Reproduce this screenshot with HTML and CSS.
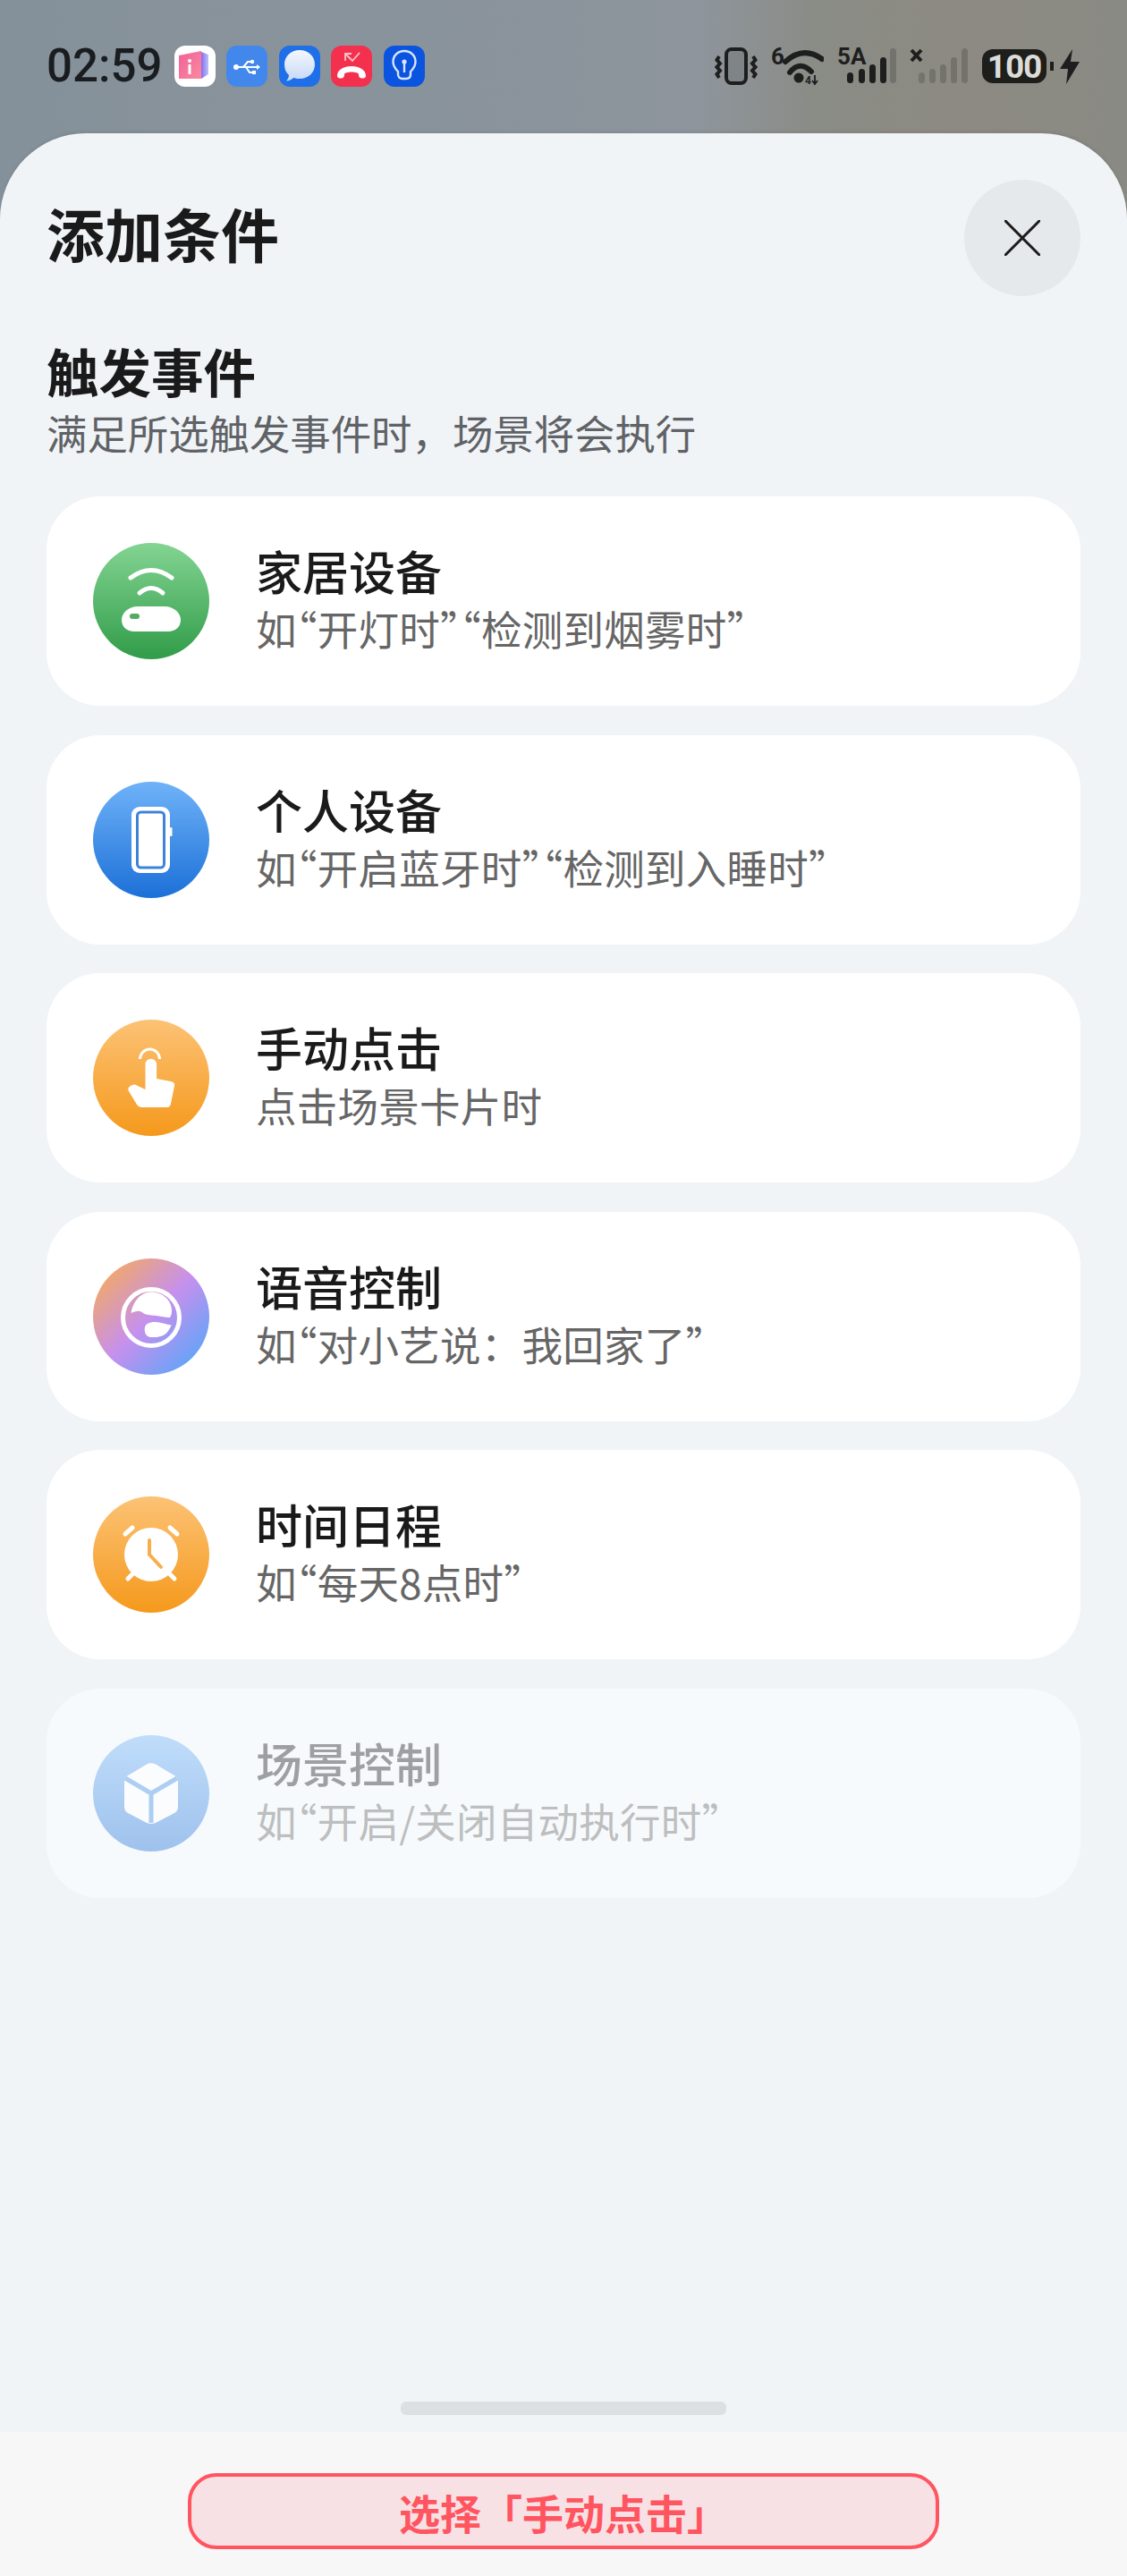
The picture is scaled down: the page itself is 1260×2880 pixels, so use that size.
FILE: index.html
```html
<!DOCTYPE html>
<html lang="zh-CN">
<head>
    <meta charset="UTF-8">
    <meta name="viewport" content="width=device-width, initial-scale=1.0">
    <title>添加条件</title>
    <link rel="stylesheet" href="styles.css">
</head>
<body>
    <!-- Status bar -->
    <header class="status-bar">
        <div class="status-left">
            <span class="clock">02:59</span>
            <svg class="notify" viewBox="0 0 46 46">
                <defs>
                    <linearGradient id="door" x1="0" y1="0" x2="1" y2="1"><stop offset="0" stop-color="#f0609a"/><stop offset="1" stop-color="#fb8a9c"/></linearGradient>
                    <linearGradient id="doorSide" x1="0" y1="0" x2="1" y2="0"><stop offset="0" stop-color="#8a6cf0"/><stop offset="1" stop-color="#b9c4f8"/></linearGradient>
                </defs>
                <rect width="46" height="46" rx="12" fill="#fff"/>
                <path d="M30 7 L38 10 V32 L30 37 Z" fill="url(#doorSide)"/>
                <path d="M5 11 L30 6 V37 H5 Z" fill="url(#door)"/>
                <circle cx="17" cy="17" r="2" fill="#fff"/>
                <rect x="15.500" y="21" width="3" height="11" fill="#fff"/>
            </svg>
            <svg class="notify" viewBox="0 0 46 46">
                <rect width="46" height="46" rx="12" fill="#4288ec"/>
                <path d="M11 24 H35 M19 24 L24 18 H28 M22 24 L26 30 H30" fill="none" stroke="#fff" stroke-width="2"/>
                <circle cx="11" cy="24" r="3" fill="#fff"/>
                <circle cx="29" cy="18" r="2.200" fill="#fff"/>
                <rect x="29" y="28" width="4" height="4" fill="#fff"/>
                <path d="M34 21 L38 24 L34 27 Z" fill="#fff"/>
            </svg>
            <svg class="notify" viewBox="0 0 46 46">
                <defs>
                    <linearGradient id="bubble" x1="0" y1="0" x2="0" y2="1"><stop offset="0" stop-color="#f4f7fd"/><stop offset="1" stop-color="#c6d9f6"/></linearGradient>
                </defs>
                <rect width="46" height="46" rx="12" fill="#1f6fe8"/>
                <path d="M23 5 C33 5 40 12 40 21 C40 30 33 37 23 37 C20 37 18 36.500 16 36 C14 38 11 39.500 8 39.500 C10 37.500 11 35 11 33 C7.500 30 6 26 6 21 C6 12 13 5 23 5 Z" fill="url(#bubble)"/>
            </svg>
            <svg class="notify" viewBox="0 0 46 46">
                <rect width="46" height="46" rx="12" fill="#f4304f"/>
                <path d="M16 17 V9 H23 M16 9 L24 17 L32 8" fill="none" stroke="#f8c6cc" stroke-width="1.800"/>
                <path d="M7 34 C7 27 14 23 23 23 C32 23 39 27 39 34 C39 36 37 36.500 35 36.500 C32 36.500 31 35 31 32 C31 30.500 27 29.500 23 29.500 C19 29.500 15 30.500 15 32 C15 35 14 36.500 11 36.500 C9 36.500 7 36 7 34 Z" fill="#fff"/>
            </svg>
            <svg class="notify" viewBox="0 0 46 46">
                <rect width="46" height="46" rx="12" fill="#0b54e0"/>
                <path d="M16 29 C13 26 10.500 23 10.500 18 C10.500 11 16 6 23 6 C30 6 35.500 11 35.500 18 C35.500 23 33 26 30 29 V32 C30 35 28 37 25 37 H21 C18 37 16 35 16 32 Z" fill="none" stroke="#d9e6fb" stroke-width="2.400"/>
                <path d="M23 20 V30" stroke="#d9e6fb" stroke-width="2.400"/>
                <circle cx="23" cy="18" r="2.600" fill="#d9e6fb"/>
            </svg>
        </div>
        <div class="status-right">
            <svg class="st-vibrate" viewBox="0 0 48 42">
                <rect x="13" y="2" width="22" height="38" rx="6" fill="rgba(30,30,30,.12)" stroke="#1e1e1e" stroke-width="4"/>
                <path d="M5 10 L2.500 14 L6 18 L2.500 22 L6 26 L2.500 30 L5 34 M43 10 L45.500 14 L42 18 L45.500 22 L42 26 L45.500 30 L43 34" fill="none" stroke="#1e1e1e" stroke-width="4"/>
            </svg>
            <svg class="st-wifi" viewBox="0 -8 59 58">
                <text x="0" y="19" class="st-num">6</text>
                <path d="M16 16 Q36 -2 57 13 M21 28 Q32 14 45 27" fill="none" stroke="#1e1e1e" stroke-width="6" stroke-linecap="round"/>
                <circle cx="31" cy="34" r="5.500" fill="#1e1e1e"/>
                <text x="38" y="41" class="st-tiny">4</text>
                <path d="M49 31 V40 M46 37 L49 41 L52 37" fill="none" stroke="#1e1e1e" stroke-width="1.800"/>
            </svg>
            <svg class="st-signal" viewBox="0 -8 66 58">
                <text x="0" y="19" class="st-num">5A</text>
                <rect x="11" y="28" width="7" height="12" rx="3.500" fill="#1e1e1e"/>
                <rect x="24" y="24" width="7" height="16" rx="3.500" fill="#1e1e1e"/>
                <rect x="36" y="19" width="7" height="21" rx="3.500" fill="#1e1e1e"/>
                <rect x="48" y="11" width="7" height="29" rx="3.500" fill="#1e1e1e"/>
                <rect x="59" y="1" width="7" height="39" rx="3.500" fill="#1e1e1e" opacity=".22"/>
            </svg>
            <svg class="st-signal" viewBox="0 -8 66 58">
                <path d="M2 3 L13 15 M13 3 L2 15" stroke="#1e1e1e" stroke-width="4"/>
                <rect x="10" y="28" width="7" height="12" rx="3.500" fill="#1e1e1e" opacity=".22"/>
                <rect x="22" y="24" width="7" height="16" rx="3.500" fill="#1e1e1e" opacity=".22"/>
                <rect x="34" y="19" width="7" height="21" rx="3.500" fill="#1e1e1e" opacity=".22"/>
                <rect x="46" y="11" width="7" height="29" rx="3.500" fill="#1e1e1e" opacity=".22"/>
                <rect x="58" y="1" width="7" height="39" rx="3.500" fill="#1e1e1e" opacity=".22"/>
            </svg>
            <div class="battery"><span class="battery-body">100</span></div>
            <svg class="st-bolt" viewBox="0 0 22 39">
                <path d="M14 0 L0 22 H9 L7 39 L22 14 H12 Z" fill="#1e1e1e"/>
            </svg>
        </div>
    </header>

    <main class="sheet">
        <div class="sheet-head">
            <h1>添加条件</h1>
            <button class="close-btn" aria-label="关闭">
                <svg viewBox="0 0 40 40" width="40" height="40"><path d="M1 1 L39 39 M39 1 L1 39" stroke="#1c1c1c" stroke-width="3" stroke-linecap="round"/></svg>
            </button>
        </div>

        <section class="section-head">
            <h2>触发事件</h2>
            <p>满足所选触发事件时，场景将会执行</p>
        </section>

        <!-- Trigger list -->
        <ul class="card-list">
            <li class="card">
                <svg class="card-icon" viewBox="0 0 130 130">
                    <defs>
                        <linearGradient id="green" x1="0" y1="0" x2="0" y2="1"><stop offset="0" stop-color="#83d492"/><stop offset="1" stop-color="#319c49"/></linearGradient>
                    </defs>
                    <circle cx="65" cy="65" r="65" fill="url(#green)"/>
                    <path d="M42 39 Q65 22 88 39 M52 56 Q65 45 78 56" fill="none" stroke="#fff" stroke-width="5" stroke-linecap="round"/>
                    <path d="M50 71 H80 C90 71 98 78 98 86 C98 94 92 99 84 99 H46 C38 99 32 94 32 86 C32 78 40 71 50 71 Z" fill="#fff"/>
                    <rect x="41" y="79" width="11" height="6" rx="3" fill="#52ac64"/>
                </svg>
                <div class="card-text">
                    <h3>家居设备</h3>
                    <p>如“开灯时”“检测到烟雾时”</p>
                </div>
            </li>
            <li class="card">
                <svg class="card-icon" viewBox="0 0 130 130">
                    <defs>
                        <linearGradient id="blue" x1="0" y1="0" x2="0" y2="1"><stop offset="0" stop-color="#6fb2f8"/><stop offset="1" stop-color="#1c70d8"/></linearGradient>
                    </defs>
                    <circle cx="65" cy="65" r="65" fill="url(#blue)"/>
                    <rect x="43" y="28" width="43" height="74" rx="9" fill="#fff"/>
                    <rect x="86" y="51" width="2.500" height="10" rx="1" fill="#fff"/>
                    <rect x="49.500" y="34" width="30" height="62" rx="4" fill="#fff" stroke="#3f83d8" stroke-width="3"/>
                </svg>
                <div class="card-text">
                    <h3>个人设备</h3>
                    <p>如“开启蓝牙时”“检测到入睡时”</p>
                </div>
            </li>
            <li class="card">
                <svg class="card-icon" viewBox="0 0 130 130">
                    <defs>
                        <linearGradient id="orange" x1="0" y1="0" x2="0" y2="1"><stop offset="0" stop-color="#fcc275"/><stop offset="1" stop-color="#f5991c"/></linearGradient>
                    </defs>
                    <circle cx="65" cy="65" r="65" fill="url(#orange)"/>
                    <path d="M53.500 49 A11 11 0 0 1 75.500 49" transform="translate(-1 -5)" fill="none" stroke="#fff" stroke-width="3"/>
                    <path d="M58.500 50 A6.300 6.300 0 0 1 71.100 50 V66 L87 69 Q92 70 91 74 L87 94 Q86 98 83 98 H54 Q51 98 49 95 L40 80 Q38 76 42 74 Q46 71 50 74 L58.500 78 Z" fill="#fff"/>
                </svg>
                <div class="card-text">
                    <h3>手动点击</h3>
                    <p>点击场景卡片时</p>
                </div>
            </li>
            <li class="card">
                <svg class="card-icon" viewBox="0 0 130 130">
                    <defs>
                        <linearGradient id="voice" x1="0" y1="0" x2="1" y2="1"><stop offset=".08" stop-color="#f5aa5e"/><stop offset=".5" stop-color="#c690ee"/><stop offset=".92" stop-color="#58a6f8"/></linearGradient>
                    </defs>
                    <circle cx="65" cy="65" r="65" fill="url(#voice)"/>
                    <circle cx="65" cy="66" r="31.500" fill="none" stroke="#fff" stroke-width="5"/>
                    <path d="M42.500 61 C45 47 54 37.500 65 37.500 C78 37.500 88 47 88 58 C88 61 87.500 64 86 66 C80 66 77 65 72.500 64.300 C67 63.500 63 63.500 59 62.500 C56 61.500 54 58.500 51 58.700 C48 58.900 45 60 42.500 61 Z" fill="#fff"/>
                    <path d="M87.700 74.400 C82 74 76 71 69.300 71 C63 71 57.700 73 57.700 79 C57.700 84 60 87.700 64.500 88 C70 88.300 78 88 82.700 82.700 C85 80 86.500 77 87.700 74.400 Z" fill="#fff"/>
                </svg>
                <div class="card-text">
                    <h3>语音控制</h3>
                    <p>如“对小艺说<span class="full-punct">：</span>我回家了”</p>
                </div>
            </li>
            <li class="card">
                <svg class="card-icon" viewBox="0 0 130 130">
                    <circle cx="65" cy="65" r="65" fill="url(#orange)"/>
                    <circle cx="65" cy="65" r="30" fill="#fff"/>
                    <path d="M36 42 L44 35 M94 42 L86 35 M39 92 L44 87 M91 92 L86 87" stroke="#fff" stroke-width="5" stroke-linecap="round"/>
                    <path d="M63 49 V65 L76 79" fill="none" stroke="#f7ae4e" stroke-width="4" stroke-linecap="round"/>
                </svg>
                <div class="card-text">
                    <h3>时间日程</h3>
                    <p>如“每天8点时”</p>
                </div>
            </li>
            <li class="card card-disabled">
                <svg class="card-icon" viewBox="0 0 130 130">
                    <circle cx="65" cy="65" r="65" fill="url(#blue)"/>
                    <path d="M60 32.500 Q65 30 70 32.500 L91 45 Q95 47 95 52 V80 Q95 85 91 87 L70 98 Q65 100 60 98 L39 87 Q35 85 35 80 V52 Q35 47 39 45 Z" fill="#fff"/>
                    <path d="M36 48 L65 65 L94 48 M65 65 V98" fill="none" stroke="#3d8fe8" stroke-width="5"/>
                </svg>
                <div class="card-text">
                    <h3>场景控制</h3>
                    <p>如“开启/关闭自动执行时”</p>
                </div>
            </li>
        </ul>

        <div class="sheet-handle"></div>
    </main>

    <footer class="bottom-bar">
        <button class="select-btn">选择「手动点击」</button>
    </footer>
</body>
</html>
```

FILE: styles.css
```css
/* Global Styles */
* {
    box-sizing: border-box;
}

body {
    margin: 0;
    width: 1260px;
    height: 2880px;
    display: flex;
    flex-direction: column;
    overflow: hidden;
    font-family: "Noto Sans CJK SC", "Noto Sans", sans-serif;
    color: #1a1a1a;
    background: linear-gradient(90deg, #85919a 0%, #8b949c 50%, #8e959c 62%, #8a8c86 72%, #8c8a82 85%, #8a8a84 100%);
}

h1, h2, h3, p, ul {
    margin: 0;
    padding: 0;
}

/* Status bar */
.status-bar {
    height: 149px;
    flex-shrink: 0;
    display: flex;
    justify-content: space-between;
    align-items: center;
    padding: 0 53px 1px 52px;
}

.status-left {
    display: flex;
    align-items: center;
    gap: 12.5px;
}

.clock {
    font-family: Roboto, sans-serif;
    font-size: 51px;
    font-weight: 500;
    line-height: 60px;
    color: #1a1d20;
    margin-right: 1px;
}

.notify {
    width: 46px;
    height: 46px;
}

.status-right {
    display: flex;
    align-items: center;
    gap: 15px;
}

.st-vibrate { width: 48px; height: 42px; }
.st-wifi { width: 59px; height: 58px; }
.st-signal { width: 66px; height: 58px; }
.st-bolt { width: 22px; height: 39px; margin-left: -8px; }

.st-num {
    font-family: Roboto, sans-serif;
    font-size: 26px;
    font-weight: 700;
    fill: #1e1e1e;
}

.st-tiny {
    font-family: Roboto, sans-serif;
    font-size: 12px;
    font-weight: 700;
    fill: #1e1e1e;
}

.battery {
    display: flex;
    align-items: center;
    gap: 4px;
    width: 80px;
}

.battery::after {
    content: "";
    width: 4px;
    height: 10px;
    background: #1e1e1a;
}

.battery-body {
    width: 72px;
    height: 38px;
    display: flex;
    align-items: center;
    justify-content: center;
    border-radius: 12px;
    background: #1e1e1a;
    color: #dcdcd8;
    font-family: Roboto, sans-serif;
    font-size: 37px;
    font-weight: 700;
    letter-spacing: -1px;
}

/* Sheet */
.sheet {
    flex: 1;
    display: flex;
    flex-direction: column;
    padding: 52px 52px 19px;
    background: #f1f4f7;
    border-radius: 96px 96px 0 0;
    box-shadow: 0 -2px 3px rgba(60, 60, 60, 0.1);
}

.sheet-head {
    display: flex;
    justify-content: space-between;
    align-items: center;
    height: 130px;
}

h1 {
    font-size: 65px;
    font-weight: 700;
    line-height: 80px;
    margin-top: -12px;
}

.close-btn {
    width: 130px;
    height: 130px;
    display: flex;
    align-items: center;
    justify-content: center;
    border: none;
    padding: 0;
    border-radius: 50%;
    background: #e6e9eb;
}

.section-head {
    margin-top: 48.5px;
}

h2 {
    font-size: 58.5px;
    font-weight: 700;
    line-height: 68px;
}

.section-head p {
    font-size: 45.4px;
    line-height: 60px;
    color: #5f6266;
    margin-top: 5.5px;
}

/* Cards */
.card-list {
    list-style: none;
    display: flex;
    flex-direction: column;
    gap: 32.6px;
    margin-top: 42px;
}

.card {
    display: flex;
    align-items: center;
    gap: 52px;
    height: 234px;
    padding: 0 52px;
    background: #fff;
    border-radius: 60px;
}

.card-disabled {
    background: #f7fafc;
}

.card-disabled > * {
    opacity: 0.4;
}

.card-icon {
    width: 130px;
    height: 130px;
    flex-shrink: 0;
}

.card-text {
    margin-bottom: 4px;
}

.card-text h3 {
    font-size: 52px;
    font-weight: 500;
    line-height: 66px;
}

.card-text p {
    font-size: 45.5px;
    letter-spacing: 0.25px;
    line-height: 66px;
    margin-top: -2px;
    color: #666;
    font-feature-settings: "halt";
}

.full-punct {
    font-feature-settings: normal;
}

.sheet-handle {
    width: 364px;
    height: 15px;
    margin: auto auto 0;
    border-radius: 6px;
    background: #dde0e3;
}

/* Bottom bar */
.bottom-bar {
    height: 161px;
    flex-shrink: 0;
    display: flex;
    justify-content: center;
    padding-top: 46px;
    background: #f7f7f8;
}

.select-btn {
    width: 840px;
    height: 85px;
    padding: 0;
    border: 4px solid #ff5560;
    border-radius: 32px;
    background: #f8e1e4;
    color: #ff5560;
    font-family: inherit;
    font-size: 46px;
    font-weight: 700;
    line-height: 1;
}
```
